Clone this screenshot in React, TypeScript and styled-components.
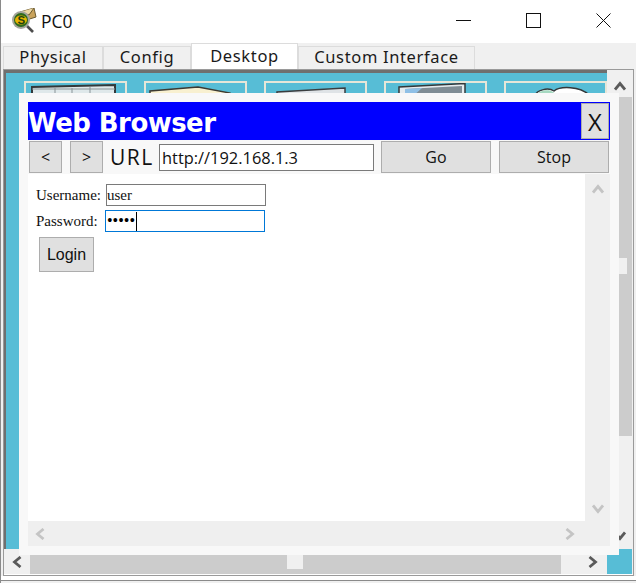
import React from 'react'
import styled, { createGlobalStyle } from 'styled-components'

const tabs = [
  { name: 'Physical', width: 100 },
  { name: 'Config', width: 88 },
  { name: 'Desktop', width: 107 },
  { name: 'Custom Interface', width: 177 },
]

const GlobalStyle = createGlobalStyle`
  html, body {
    margin: 0;
    padding: 0;
    background: #ffffff;
    overflow: hidden;
  }
`

function Chevron({ dir, light }: { dir: 'up' | 'down' | 'left' | 'right'; light?: boolean }) {
  const turn = { up: 0, right: 90, down: 180, left: 270 }[dir]
  return (
    <svg width="12" height="10" viewBox="0 0 12 10" style={{ transform: `rotate(${turn}deg)` }}>
      <path d="M1 8.5 L6 2.5 L11 8.5" fill="none" stroke={light ? '#c4c4c4' : '#5a5a5a'} strokeWidth="2.8" />
    </svg>
  )
}

function AppIcon() {
  return (
    <svg width="26" height="26" viewBox="0 0 26 26">
      <path d="M9 4 L23 0 L25 9 L12 13 Z" fill="#c9a35c" stroke="#6b5a30" />
      <path d="M9 4 L18 7 L23 0" fill="#ecd7a4" stroke="#6b5a30" />
      <path d="M15 17 L22 24" stroke="#4c4c4c" strokeWidth="2.6" />
      <circle cx="10" cy="12" r="9" fill="#a5a59c" />
      <circle cx="10" cy="12" r="7" fill="#2f6b1c" />
      <ellipse cx="10" cy="12" rx="6" ry="4.5" fill="#e8b400" />
      <text x="6.6" y="16" fontSize="11.5" fontWeight="700" fill="#23420f" fontFamily="Liberation Sans, sans-serif">S</text>
    </svg>
  )
}

function DesktopIcon({ kind }: { kind: number }) {
  if (kind === 0) {
    return (
      <svg width="103" height="12" viewBox="0 0 103 12">
        <path d="M8 14 L8 4 L91 2 L91 14 Z" fill="#dfe8ea" stroke="#33383a" strokeWidth="2" />
        <path d="M8 6 H91 M31 5 V12 M48 5 V12 M66 4 V12" stroke="#8a9498" />
      </svg>
    )
  }
  if (kind === 1) {
    return (
      <svg width="103" height="12" viewBox="0 0 103 12">
        <path d="M6 14 L6 8 L54 4 L86 10 L86 14 Z" fill="#f8f0d0" stroke="#3c3a32" strokeWidth="1.5" />
      </svg>
    )
  }
  if (kind === 2) {
    return (
      <svg width="103" height="12" viewBox="0 0 103 12">
        <path d="M13 14 L13 9 L81 5 L81 14 Z" fill="#dfe3e6" stroke="#3a3d3f" strokeWidth="1.5" />
      </svg>
    )
  }
  if (kind === 3) {
    return (
      <svg width="103" height="12" viewBox="0 0 103 12">
        <path d="M15 14 L15 4 L81 0.5 L81 14 Z" fill="#e6ecef" stroke="#33383a" strokeWidth="1.5" />
        <path d="M21 14 L21 6 L78 3 L78 14 Z" fill="#808d95" />
        <path d="M21 14 L21 6 L38 5 L28 14 Z" fill="#8fc0e6" />
      </svg>
    )
  }
  return (
    <svg width="103" height="12" viewBox="0 0 103 12">
      <path d="M30 14 C32 7 44 4 50 8 C56 3 76 3 85 12 L86 14 Z" fill="#ffffff" stroke="#33383a" strokeWidth="1.5" />
      <path d="M31 14 C33 8 44 5 49 9 L56 14 Z" fill="#a5d8c0" />
    </svg>
  )
}

export default function App() {
  return (
    <>
      <GlobalStyle />
      <Window>
        <TitleBar>
          <AppIcon />
          <TitleText>PC0</TitleText>
          <WindowControls>
            <svg width="15" height="15" viewBox="0 0 15 15">
              <path d="M0 7.5 H15" stroke="#111111" />
            </svg>
            <svg width="15" height="15" viewBox="0 0 15 15">
              <rect x="0.5" y="0.5" width="14" height="14" fill="none" stroke="#111111" />
            </svg>
            <svg width="15" height="15" viewBox="0 0 15 15">
              <path d="M0.5 0.5 L14.5 14.5 M14.5 0.5 L0.5 14.5" stroke="#111111" />
            </svg>
          </WindowControls>
        </TitleBar>
        <TabBar>
          {tabs.map((t) => (
            <Tab key={t.name} $width={t.width} $active={t.name === 'Desktop'}>{t.name}</Tab>
          ))}
        </TabBar>
        <Frame>
          <Desktop>
            <IconRow>
              {[0, 1, 2, 3, 4].map((k) => (
                <IconTile key={k}><DesktopIcon kind={k} /></IconTile>
              ))}
            </IconRow>
          </Desktop>
          <OuterV>
            <Chevron dir="up" />
            <OuterVTrack>
              <OuterVThumb />
            </OuterVTrack>
            <OuterDownMark>
              <Chevron dir="down" />
            </OuterDownMark>
          </OuterV>
          <OuterH>
            <OuterHEnd><Chevron dir="left" /></OuterHEnd>
            <OuterHTrack><OuterHThumb /></OuterHTrack>
            <OuterHEndRight><Chevron dir="right" /></OuterHEndRight>
            <Corner />
          </OuterH>
          <BrowserPanel>
            <BrowserHead>
              <BrowserTitle>Web Browser</BrowserTitle>
              <CloseButton>X</CloseButton>
            </BrowserHead>
            <Toolbar>
              <NavButton>&lt;</NavButton>
              <NavButton>&gt;</NavButton>
              <UrlLabel>URL</UrlLabel>
              <UrlInput readOnly value="http://192.168.1.3" />
              <ActionButton>Go</ActionButton>
              <ActionButton>Stop</ActionButton>
            </Toolbar>
            <PageArea>
              <PageBody>
                <FormRow>
                  <FormLabel>Username:</FormLabel>
                  <FormInput readOnly value="user" />
                </FormRow>
                <FormRow>
                  <FormLabel>Password:</FormLabel>
                  <PasswordBox>
                    <span>•••••</span>
                    <Caret />
                  </PasswordBox>
                </FormRow>
                <LoginButton>Login</LoginButton>
              </PageBody>
              <InnerV>
                <Chevron dir="up" light />
                <Chevron dir="down" light />
              </InnerV>
              <InnerH>
                <Chevron dir="left" light />
                <Chevron dir="right" light />
              </InnerH>
            </PageArea>
          </BrowserPanel>
        </Frame>
        <BottomEdge />
      </Window>
    </>
  )
}

const Window = styled.div`
  width: 636px;
  height: 583px;
  display: flex;
  flex-direction: column;
  background: #f0f0f0;
  font-family: 'Noto Sans', 'Liberation Sans', sans-serif;
  overflow: hidden;
  border-left: 1px solid #8a8a8a;
  box-sizing: border-box;
`

const TitleBar = styled.div`
  height: 43px;
  flex: none;
  box-sizing: border-box;
  background: #ffffff;
  display: flex;
  align-items: center;
  padding: 0 25px 2px 10px;
  gap: 4px;
`

const TitleText = styled.span`
  font-size: 17.5px;
  color: #111111;
  font-family: 'Open Sans', 'Noto Sans', sans-serif;
`

const WindowControls = styled.div`
  margin-left: auto;
  display: flex;
  align-items: center;
  gap: 55px;
`

const TabBar = styled.div`
  height: 26px;
  flex: none;
  display: flex;
  align-items: flex-end;
  padding-left: 2px;
`

const Tab = styled.div<{ $active?: boolean; $width: number }>`
  width: ${(p) => p.$width}px;
  height: ${(p) => (p.$active ? 26 : 23)}px;
  box-sizing: border-box;
  padding-bottom: ${(p) => (p.$active ? 2 : 3)}px;
  display: flex;
  align-items: center;
  justify-content: center;
  font-size: 16.5px;
  letter-spacing: 0.65px;
  color: #1a1a1a;
  background: ${(p) => (p.$active ? '#ffffff' : '#f0f0f0')};
  border: 1px solid #dcdcdc;
  border-bottom: none;
`

const Frame = styled.div`
  position: relative;
  width: 631px;
  height: 507px;
  flex: none;
  margin-left: 2px;
  box-sizing: border-box;
  border: 1px solid #9a9a9a;
  background: #ffffff;
  padding-bottom: 1px;
  display: grid;
  grid-template-columns: 603px 26px;
  grid-template-rows: 479px 25px;
`

const BottomEdge = styled.div`
  height: 4px;
  flex: none;
  background: #ffffff;
  border-bottom: 1px solid #8a8a8a;
`

const Desktop = styled.div`
  background: #57bdd6;
  border-top: 3px solid #6f6f6f;
  border-left: 2px solid #6f6f6f;
  overflow: hidden;
`

const IconRow = styled.div`
  display: flex;
  gap: 17px;
  padding: 8px 0 0 18px;
`

const IconTile = styled.div`
  width: 103px;
  flex: none;
  height: 60px;
  box-sizing: border-box;
  border: 2px solid #e6e6d8;
  border-bottom: none;
  svg {
    display: block;
    margin-left: -2px;
  }
`

const OuterV = styled.div`
  position: relative;
  background: #f0f0f0;
  display: flex;
  flex-direction: column;
  align-items: center;
  padding-top: 11px;
  svg {
    flex: none;
  }
`

const OuterVTrack = styled.div`
  position: absolute;
  left: 12px;
  top: 27px;
  width: 13px;
  height: 339px;
  background: #cccccc;
`

const OuterVThumb = styled.div`
  position: absolute;
  left: 0;
  top: 161px;
  width: 8px;
  height: 16px;
  background: #f0f0f0;
`

const OuterDownMark = styled.div`
  position: absolute;
  left: 7px;
  top: 461px;
  display: flex;
`

const OuterH = styled.div`
  grid-column: 1 / 3;
  display: flex;
  background: #f0f0f0;
  padding-right: 1px;
`

const OuterHEnd = styled.div`
  width: 26px;
  flex: none;
  display: flex;
  align-items: center;
  justify-content: center;
`

const OuterHTrack = styled.div`
  flex: 1;
  background: #cccccc;
  padding: 6px 0 0 257px;
`

const OuterHThumb = styled.div`
  width: 16px;
  height: 14px;
  background: #f0f0f0;
`

const OuterHEndRight = styled(OuterHEnd)`
  width: 46px;
  padding-left: 18px;
  box-sizing: border-box;
`

const Corner = styled.div`
  width: 25px;
  flex: none;
  background: #57bdd6;
`

const BrowserPanel = styled.div`
  position: absolute;
  left: 15px;
  top: 23px;
  width: 600px;
  height: 462px;
  box-sizing: border-box;
  padding: 9px;
  background: #f8f8f8;
  display: flex;
  flex-direction: column;
`

const BrowserHead = styled.div`
  height: 38px;
  flex: none;
  background: #0000ff;
  display: flex;
  align-items: center;
  justify-content: space-between;
  padding: 1px 1px 1px 0;
  box-sizing: border-box;
`

const BrowserTitle = styled.span`
  color: #ffffff;
  font-family: 'DejaVu Sans', sans-serif;
  font-weight: 700;
  font-size: 26px;
  letter-spacing: -0.55px;
  line-height: 36px;
  margin-top: 4px;
`

const CloseButton = styled.button`
  width: 28px;
  height: 36px;
  padding: 0;
  background: #e0e0e0;
  border: 1px solid #adadad;
  font-size: 24px;
  font-family: 'Open Sans', sans-serif;
  color: #111111;
`

const Toolbar = styled.div`
  height: 34px;
  flex: none;
  display: flex;
  align-items: center;
  padding-left: 1px;
  box-sizing: border-box;
`

const NavButton = styled.button`
  width: 33px;
  height: 32px;
  flex: none;
  padding: 0;
  margin-right: 8px;
  background: #e0e0e0;
  border: 1px solid #adadad;
  font-size: 16px;
  font-family: 'Open Sans', sans-serif;
  color: #111111;
`

const UrlLabel = styled.span`
  width: 49px;
  flex: none;
  font-size: 21px;
  letter-spacing: 1.5px;
  color: #111111;
  margin-left: -1px;
  font-family: 'Open Sans', sans-serif;
`

const UrlInput = styled.input`
  width: 215px;
  height: 27px;
  flex: none;
  box-sizing: border-box;
  border: 1px solid #7a7a7a;
  padding: 0 2px;
  font-size: 16.4px;
  font-family: 'Open Sans', sans-serif;
  color: #111111;
  outline: none;
  margin-right: 7px;
`

const ActionButton = styled.button`
  width: 110px;
  height: 32px;
  flex: none;
  padding: 0;
  background: #e0e0e0;
  border: 1px solid #adadad;
  font-size: 16px;
  font-family: 'Open Sans', sans-serif;
  color: #111111;
  & + & {
    margin-left: 8px;
  }
`

const PageArea = styled.div`
  flex: 1;
  display: grid;
  grid-template-columns: 557px 25px;
  grid-template-rows: 347px 25px;
  min-height: 0;
`

const PageBody = styled.div`
  background: #ffffff;
  padding: 8px 0 0 8px;
  font-family: 'Liberation Serif', serif;
  color: #111111;
`

const FormRow = styled.div`
  display: flex;
  align-items: center;
  height: 26px;
`

const FormLabel = styled.span`
  width: 70px;
  flex: none;
  font-size: 15px;
`

const FormInput = styled.input`
  width: 160px;
  height: 22px;
  box-sizing: border-box;
  border: 1px solid #7a7a7a;
  padding: 0;
  font-family: 'Liberation Serif', serif;
  font-size: 15px;
  color: #111111;
  outline: none;
`

const PasswordBox = styled.div`
  width: 160px;
  height: 22px;
  box-sizing: border-box;
  border: 1px solid #0078d7;
  padding: 0 1px;
  margin-left: -1px;
  display: flex;
  align-items: center;
  font-size: 16px;
  color: #000000;
`

const Caret = styled.i`
  display: inline-block;
  width: 1px;
  height: 19px;
  margin-left: 1px;
  background: #000000;
`

const LoginButton = styled.button`
  display: block;
  width: 55px;
  height: 35px;
  margin: 3px 0 0 3px;
  padding: 1px 0 0;
  background: #e0e0e0;
  border: 1px solid #adadad;
  font-size: 16px;
  font-family: 'Liberation Sans', sans-serif;
  color: #111111;
`

const InnerV = styled.div`
  background: #efefef;
  display: flex;
  flex-direction: column;
  align-items: center;
  justify-content: space-between;
  padding: 10px 0 7px;
`

const InnerH = styled.div`
  grid-column: 1 / 3;
  background: #efefef;
  display: flex;
  align-items: center;
  justify-content: space-between;
  padding: 0 34px 0 6px;
`
